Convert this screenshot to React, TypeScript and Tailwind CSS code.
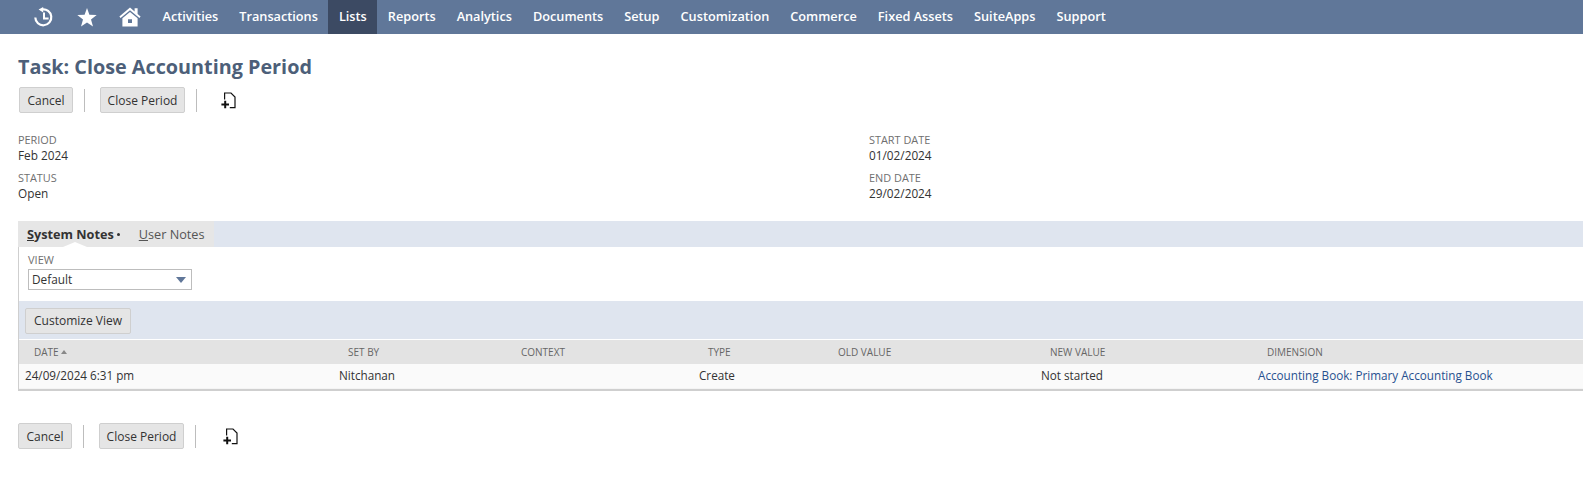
import React from 'react';

const navItems = ['Activities', 'Transactions', 'Lists', 'Reports', 'Analytics', 'Documents', 'Setup', 'Customization', 'Commerce', 'Fixed Assets', 'SuiteApps', 'Support'];

const columns = [
  { label: 'DATE', value: '24/09/2024 6:31 pm' },
  { label: 'SET BY', value: 'Nitchanan' },
  { label: 'CONTEXT', value: '' },
  { label: 'TYPE', value: 'Create' },
  { label: 'OLD VALUE', value: '' },
  { label: 'NEW VALUE', value: 'Not started' },
];

const HistoryIcon = () => (
  <svg width="19" height="20" viewBox="0 0 19 20" fill="none" stroke="white" strokeWidth="2.2">
    <path d="M8 2.4A8 8 0 1 1 1.3 10.5" />
    <path d="M4.6 2.6 L9.2 0 L9.2 5.4 Z" fill="white" stroke="none" />
    <path d="M10 5.4V11.4H14.6" strokeWidth="2" />
  </svg>
);

const StarIcon = () => (
  <svg width="20" height="19" viewBox="0 0 20 19" fill="white">
    <path d="M10 0 12.4 6.7 19.7 6.9 14 11.4 16 18.6 10 14.4 4 18.6 6 11.4 0.3 6.9 7.6 6.7Z" />
  </svg>
);

const HomeIcon = () => (
  <svg width="22" height="20" viewBox="0 0 22 20" fill="white">
    <path d="M11 0.5 15.6 4.4V1.2H18.6V7L21.6 9.6 20.4 11 11 3.2 1.6 11 0.4 9.6Z" />
    <path fillRule="evenodd" d="M11 5 18.6 11.2V19.6H3.4V11.2ZM9 12.2V16H13V12.2Z" />
  </svg>
);

const AddFileIcon = () => (
  <svg width="15" height="17" viewBox="0 0 15 17" fill="none" stroke="#111" strokeWidth="1.2">
    <path d="M3.6 7.4V1H10L14 5V15.6H8.8" />
    <path d="M0.4 12.4H8M4.2 8.8V16.2" strokeWidth="2" />
  </svg>
);

const ActionButton = ({ label, padding }: { label: string; padding: string }) => (
  <button className={`h-[26px] ${padding} pt-px bg-[#e5e5e5] border border-[#cfcfcf] rounded-[2px] text-[12px] text-[#333] leading-none`}>
    {label}
  </button>
);

const ActionBar = ({ iconClass }: { iconClass: string }) => (
  <div className="flex items-center">
    <ActionButton label="Cancel" padding="px-[7.5px]" />
    <div className="w-px h-[23px] bg-[#bdbdbd] ml-[11px] mr-[14.5px]" />
    <ActionButton label="Close Period" padding="px-[7px]" />
    <div className="w-px h-[23px] bg-[#bdbdbd] ml-[11px]" />
    <div className={iconClass}><AddFileIcon /></div>
  </div>
);

const Field = ({ label, value }: { label: string; value: string }) => (
  <div className="h-[38px]">
    <div className="text-[10.9px] leading-[15px] text-[#6f6f6f]">{label}</div>
    <div className="text-[11.8px] leading-[16px] text-[#333]">{value}</div>
  </div>
);

const gridCols = 'grid grid-cols-[314px_173px_187px_130px_212px_217px_1fr]';

export default function App() {
  return (
    <div className="w-[1583px] h-[486px] overflow-hidden bg-white font-['Open_Sans',sans-serif]">
      {/* top nav */}
      <nav className="h-[34px] bg-[#607799] flex items-center">
        <div className="flex items-center pl-[34px] w-[152px]">
          <HistoryIcon />
          <div className="ml-[24px] flex"><StarIcon /></div>
          <div className="ml-[22px] flex"><HomeIcon /></div>
        </div>
        {navItems.map((item) => (
          <div
            key={item}
            className={`h-full flex items-center px-[10.5px] text-[12.73px] font-semibold text-white ${item === 'Lists' ? 'bg-[#3c4a63]' : ''}`}
          >
            {item}
          </div>
        ))}
      </nav>

      <div className="pl-[18px]">
        <h1 className="mt-[19px] text-[19.8px] leading-[27px] font-bold text-[#4d5f79]">Task: Close Accounting Period</h1>
        <div className="mt-[7px] pl-px"><ActionBar iconClass="ml-[24px]" /></div>

        {/* main fields */}
        <div className="mt-[19px] grid grid-cols-[851px_1fr]">
          <div>
            <Field label="PERIOD" value="Feb 2024" />
            <Field label="STATUS" value="Open" />
          </div>
          <div>
            <Field label="START DATE" value="01/02/2024" />
            <Field label="END DATE" value="29/02/2024" />
          </div>
        </div>

        {/* tabs */}
        <div className="mt-[13px] h-[26px] bg-[#dfe5ef] flex">
          <div className="w-[196px] bg-[#e6e6e6] flex items-center pl-[9px] text-[12.7px] leading-none relative">
            <span className="font-bold text-[#333]"><span className="underline">S</span>ystem Notes</span>
            <span className="ml-[3px] w-[3px] h-[3px] rounded-full bg-[#333]" />
            <span className="ml-[19px] text-[#555]"><span className="underline">U</span>ser Notes</span>
            <div className="absolute left-[45px] bottom-0 w-0 h-0 border-x-[12px] border-x-transparent border-b-[5px] border-b-white" />
          </div>
        </div>

        {/* tab panel */}
        <div className="border-l border-b-2 border-[#cfcfcf]">
          <div className="h-[54px] pl-[9px] pt-[6px]">
            <div className="text-[11px] leading-[14px] text-[#6f6f6f]">VIEW</div>
            <div className="mt-[2px] w-[164px] h-[21px] border border-[#bdbdbd] flex items-center justify-between pl-[3px] pr-[5px] text-[11.8px] text-[#333]">
              <span>Default</span>
              <span className="w-0 h-0 border-x-[5px] border-x-transparent border-t-[6px] border-t-[#607799]" />
            </div>
          </div>
          <div className="h-[38px] bg-[#dfe5ef] pl-[6px] pt-[6px]">
            <button className="h-[26px] px-[8px] bg-[#e5e5e5] border border-[#cfcfcf] rounded-[2px] text-[12px] font-medium text-[#333] leading-none">
              Customize View
            </button>
          </div>

          {/* system notes list */}
          <div className={`${gridCols} h-[24px] bg-[#e3e3e3] items-center pl-[15px] text-[10px] text-[#666] mt-px`}>
            {columns.map((col) => (
              <div key={col.label} className="flex items-center">
                {col.label}
                {col.label === 'DATE' && <span className="ml-[2px] w-0 h-0 border-x-[3px] border-x-transparent border-b-[4px] border-b-[#888]" />}
              </div>
            ))}
            <div>DIMENSION</div>
          </div>
          <div className={`${gridCols} h-[24px] pb-px bg-[#fafafa] items-center pl-[6px] text-[11.7px] text-[#333]`}>
            {columns.map((col) => (
              <div key={col.label}>{col.value}</div>
            ))}
            <div className="text-[#27508f]">Accounting Book: Primary Accounting Book</div>
          </div>
          <div className="h-px bg-[#f4f4f4]" />
        </div>

        <div className="mt-[32px]"><ActionBar iconClass="ml-[27px]" /></div>
      </div>
    </div>
  );
}
